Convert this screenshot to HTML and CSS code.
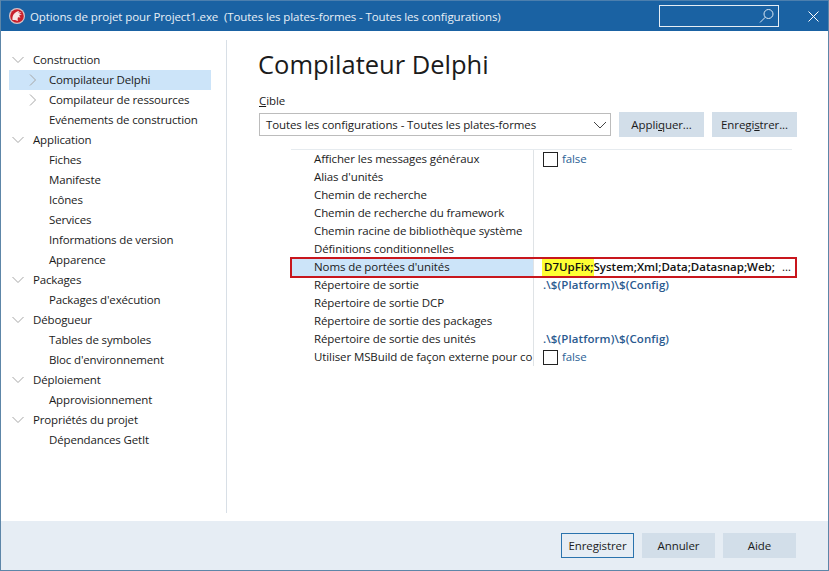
FILE: index.html
```html
<!DOCTYPE html>
<html lang="fr">
<head>
    <meta charset="UTF-8">
    <title>Options de projet pour Project1.exe</title>
    <link rel="stylesheet" href="styles.css">
</head>
<body>
    <div class="window">
        <div class="titlebar">
            <svg class="app-icon" width="16" height="16" viewBox="0 0 16 16">
                <circle cx="8" cy="8" r="8" fill="#d9c4c8"/>
                <circle cx="8" cy="8" r="6.8" fill="#c8202c"/>
                <path d="M3.5 12 C3 7.5 5.5 3.5 10.5 3 L9 4.6 L12.5 4.2 L10 6 L13 6.6 L10 7.6 L11.5 9.5 L9 9.2 C8.5 10.5 8.5 11.5 9 13 L6 12 Z" fill="#f7e6e6"/>
            </svg>
            <span class="title">Options de projet pour Project1.exe&nbsp; (Toutes les plates-formes - Toutes les configurations)</span>
            <div class="search">
                <svg width="16" height="16" viewBox="0 0 16 16" fill="none" stroke="#dbe7f2" stroke-width="1">
                    <circle cx="9.5" cy="6" r="4.5"/>
                    <path d="M6.3 9.2 L1 14.5"/>
                </svg>
            </div>
            <svg class="close" width="11" height="11" viewBox="0 0 11 11" stroke="#fff" stroke-width="1">
                <path d="M0.5 0.5 L10.5 10.5 M10.5 0.5 L0.5 10.5"/>
            </svg>
        </div>

        <div class="main">
            <!-- Tree -->
            <div class="tree">
                <div class="node top"><svg class="arrow" viewBox="0 0 12 12"><path d="M0.5 3 L6 8.5 L11.5 3"/></svg>Construction</div>
                <div class="node sub selected"><svg class="arrow" viewBox="0 0 12 12"><path d="M2 0.5 L7.5 6 L2 11.5"/></svg>Compilateur Delphi</div>
                <div class="node sub"><svg class="arrow" viewBox="0 0 12 12"><path d="M2 0.5 L7.5 6 L2 11.5"/></svg>Compilateur de ressources</div>
                <div class="node sub">Evénements de construction</div>
                <div class="node top"><svg class="arrow" viewBox="0 0 12 12"><path d="M0.5 3 L6 8.5 L11.5 3"/></svg>Application</div>
                <div class="node sub">Fiches</div>
                <div class="node sub">Manifeste</div>
                <div class="node sub">Icônes</div>
                <div class="node sub">Services</div>
                <div class="node sub">Informations de version</div>
                <div class="node sub">Apparence</div>
                <div class="node top"><svg class="arrow" viewBox="0 0 12 12"><path d="M0.5 3 L6 8.5 L11.5 3"/></svg>Packages</div>
                <div class="node sub">Packages d'exécution</div>
                <div class="node top"><svg class="arrow" viewBox="0 0 12 12"><path d="M0.5 3 L6 8.5 L11.5 3"/></svg>Débogueur</div>
                <div class="node sub">Tables de symboles</div>
                <div class="node sub">Bloc d'environnement</div>
                <div class="node top"><svg class="arrow" viewBox="0 0 12 12"><path d="M0.5 3 L6 8.5 L11.5 3"/></svg>Déploiement</div>
                <div class="node sub">Approvisionnement</div>
                <div class="node top"><svg class="arrow" viewBox="0 0 12 12"><path d="M0.5 3 L6 8.5 L11.5 3"/></svg>Propriétés du projet</div>
                <div class="node sub">Dépendances GetIt</div>
            </div>

            <!-- Options -->
            <div class="panel">
                <h1>Compilateur Delphi</h1>
                <label class="target-label"><u>C</u>ible</label>
                <div class="target-row">
                    <div class="select">
                        <span>Toutes les configurations - Toutes les plates-formes</span>
                        <svg width="14" height="8" viewBox="0 0 14 8" fill="none" stroke="#444" stroke-width="1"><path d="M1 1 L7 7 L13 1"/></svg>
                    </div>
                    <button class="btn">Appli<u>q</u>uer...</button>
                    <button class="btn">Enregi<u>s</u>trer...</button>
                </div>

                <div class="grid">
                    <div class="row"><div class="name">Afficher les messages généraux</div><div class="value"><span class="check"></span><span class="bool">false</span></div></div>
                    <div class="row"><div class="name">Alias d'unités</div><div class="value"></div></div>
                    <div class="row"><div class="name">Chemin de recherche</div><div class="value"></div></div>
                    <div class="row"><div class="name">Chemin de recherche du framework</div><div class="value"></div></div>
                    <div class="row"><div class="name">Chemin racine de bibliothèque système</div><div class="value"></div></div>
                    <div class="row"><div class="name">Définitions conditionnelles</div><div class="value"></div></div>
                    <div class="row current"><div class="name">Noms de portées d'unités</div><div class="value strong"><mark>D7UpFix;</mark>System;Xml;Data;Datasnap;Web;<span class="more">…</span></div></div>
                    <div class="row"><div class="name">Répertoire de sortie</div><div class="value path">.\$(Platform)\$(Config)</div></div>
                    <div class="row"><div class="name">Répertoire de sortie DCP</div><div class="value"></div></div>
                    <div class="row"><div class="name">Répertoire de sortie des packages</div><div class="value"></div></div>
                    <div class="row"><div class="name">Répertoire de sortie des unités</div><div class="value path">.\$(Platform)\$(Config)</div></div>
                    <div class="row"><div class="name">Utiliser MSBuild de façon externe pour co</div><div class="value"><span class="check"></span><span class="bool">false</span></div></div>
                    <div class="red-box"></div>
                </div>
            </div>
        </div>

        <div class="footer">
            <button class="btn default">Enregistrer</button>
            <button class="btn">Annuler</button>
            <button class="btn">Aide</button>
        </div>
    </div>
</body>
</html>
```

FILE: styles.css
```css
* {
    box-sizing: border-box;
}
body {
    margin: 0;
    font-family: "Open Sans", "Noto Sans", sans-serif;
    font-size: 11.5px;
    letter-spacing: -0.1px;
    color: #1b1b1b;
    background-color: #fff;
}
.window {
    width: 829px;
    height: 571px;
    display: flex;
    flex-direction: column;
    border: 1px solid #5d86a8;
    border-top: 0;
    overflow: hidden;
}
.titlebar {
    height: 31px;
    flex: none;
    background-color: #1a62a3;
    border-top: 1px solid #4c7fae;
    display: flex;
    align-items: center;
    padding-left: 8px;
    color: #e8f0f7;
}
.app-icon {
    flex: none;
    margin-right: 5px;
}
.title {
    flex: 1;
    white-space: nowrap;
}
.search {
    width: 120px;
    height: 22px;
    border: 1px solid #e6eef5;
    display: flex;
    align-items: center;
    justify-content: flex-end;
    padding-right: 3px;
}
.close {
    margin: 0 9px 0 29px;
}
.main {
    flex: 1;
    display: flex;
    min-height: 0;
    padding-top: 9px;
    padding-bottom: 8px;
}
.tree {
    width: 226px;
    flex: none;
    padding: 10px 15px 0 8px;
    border-right: 1px solid #d8dfe6;
    letter-spacing: -0.15px;
}
.node {
    height: 20px;
    line-height: 20px;
    position: relative;
    white-space: nowrap;
}
.node.top {
    padding-left: 24px;
}
.node.sub {
    padding-left: 40px;
}
.node.selected {
    background-color: #cce4f9;
}
.arrow {
    position: absolute;
    top: 4px;
    width: 12px;
    height: 12px;
    fill: none;
    stroke: #a6a6a6;
    stroke-width: 1;
}
.top .arrow {
    left: 3px;
}
.sub .arrow {
    left: 19px;
}
.panel {
    flex: 1;
    padding-left: 31px;
    min-width: 0;
}
h1 {
    margin: 0;
    font-size: 25.5px;
    font-weight: 400;
    letter-spacing: 0;
    line-height: 32px;
    padding-top: 8px;
    color: #1b1b1b;
    white-space: nowrap;
}
.target-label {
    display: block;
    margin: 12px 0 0 1px;
    height: 17px;
    line-height: 17px;
}
.target-row {
    display: flex;
    align-items: center;
    gap: 8px;
    height: 25px;
    margin-top: 3px;
    padding-left: 1px;
}
.select {
    width: 352px;
    height: 23px;
    border: 1px solid #bcbcbc;
    display: flex;
    align-items: center;
    justify-content: space-between;
    padding: 0 3px 0 6px;
}
.btn {
    width: 85px;
    height: 25px;
    padding: 0;
    border: 0;
    background-color: #d2dee9;
    color: #1b1b1b;
    font: inherit;
    letter-spacing: inherit;
}
.grid {
    position: relative;
    margin: 12px 0 0 33px;
    width: 501px;
    border-top: 1px solid #e6ebef;
}
.row {
    display: flex;
    height: 18px;
    line-height: 18px;
}
.name {
    width: 243px;
    flex: none;
    padding-left: 23px;
    white-space: nowrap;
    border-right: 1px solid #dfe3e6;
}
.value {
    flex: 1;
    display: flex;
    align-items: center;
    padding-left: 9px;
    white-space: nowrap;
    min-width: 0;
}
.check {
    width: 15px;
    height: 15px;
    border: 1px solid #222;
    margin-right: 4px;
    background-color: #fff;
}
.bool {
    color: #2c5f95;
}
.path {
    font-weight: 600;
    letter-spacing: 0.1px;
    color: #2a5a8f;
}
.current .name {
    background-color: #cce4f9;
}
.strong {
    font-weight: 600;
    letter-spacing: 0;
    color: #111;
    padding-left: 8px;
    overflow: visible;
}
mark {
    background-color: #ffff33;
    color: inherit;
    padding-left: 2px;
}
.more {
    margin-left: 7px;
    font-weight: 400;
    letter-spacing: 0.6px;
}
/* annotation drawn over the grid */
.red-box {
    position: absolute;
    left: -1px;
    top: 107px;
    width: 507px;
    height: 21px;
    border: 2px solid #c8161d;
}
.footer {
    height: 49px;
    flex: none;
    background-color: #e6edf4;
    display: flex;
    justify-content: flex-end;
    align-items: center;
    gap: 8px;
    padding-right: 32px;
}
.footer .btn {
    width: 73px;
}
.footer .default {
    background-color: #e6edf4;
    border: 1px solid #2a73ad;
}
```
